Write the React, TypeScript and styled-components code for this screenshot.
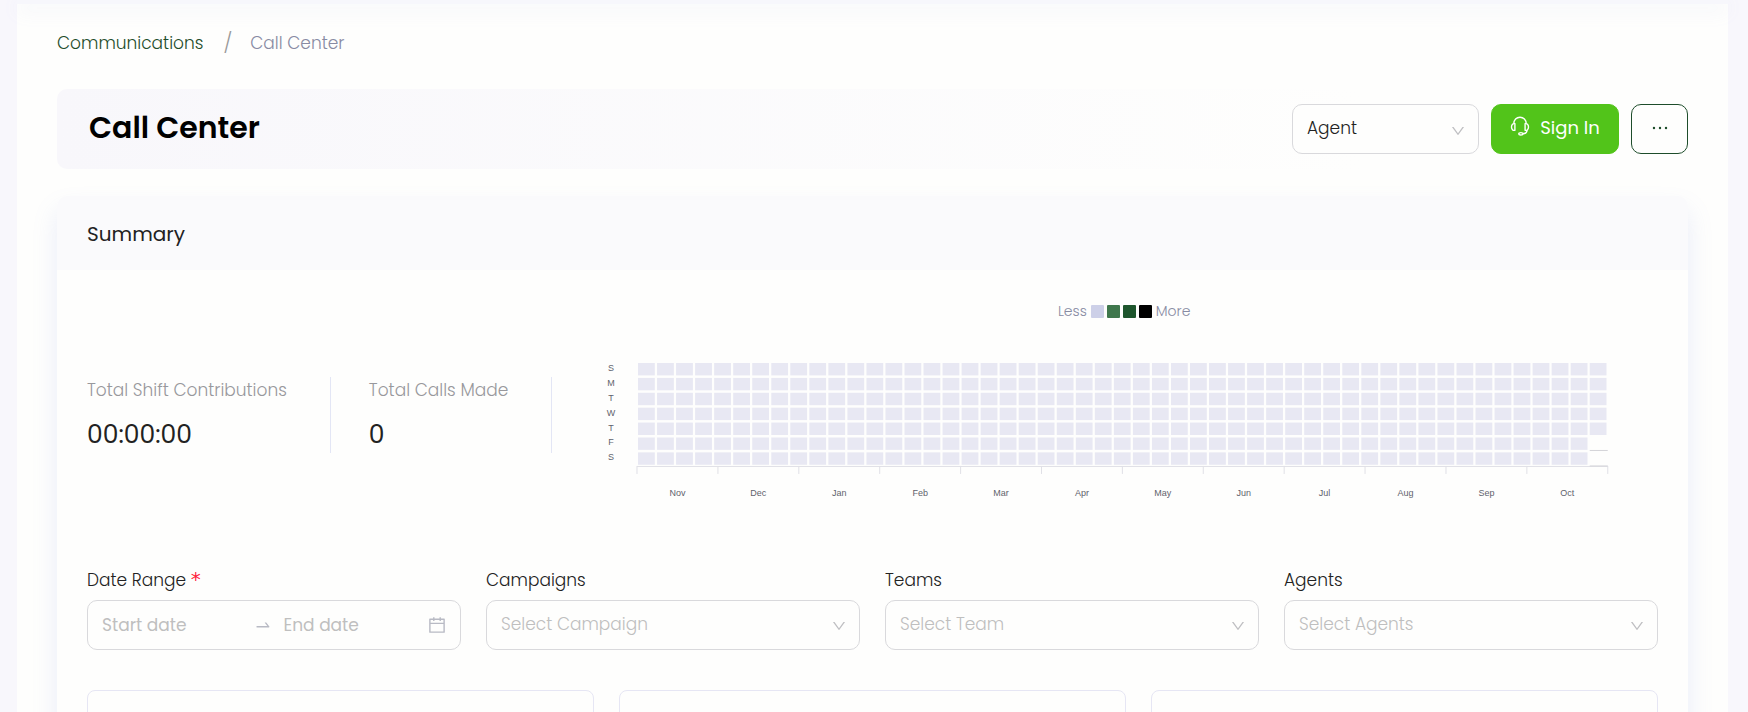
import React from 'react';
import styled, { createGlobalStyle, css } from 'styled-components';
import { AiOutlineCalendar, AiOutlineDown, AiOutlineEllipsis, AiOutlineSwapRight } from 'react-icons/ai';

const fontStack = `Poppins, Inter, 'Liberation Sans', sans-serif`;
const surface = '#fefefd';
const muted = '#888ba3';

const GlobalStyle = createGlobalStyle`
  *, *::before, *::after { box-sizing: border-box; }
  body {
    margin: 0;
    background: #f8f7fc;
    color: #222;
    font-family: ${fontStack};
    font-size: 17px;
    font-weight: 300;
    line-height: 24px;
  }
  button, input, select { font: inherit; color: inherit; }
  a { color: inherit; text-decoration: none; }
  h1, h2, p, dl, dd, dt, ol { margin: 0; padding: 0; }
`;

const Shell = styled.div`
  height: 100vh;
  overflow-y: auto;
  scrollbar-width: none;
  padding: 0 20px 0 17px;
`;

const TopBar = styled.header`
  position: relative;
  height: 4px;
  background: #f7f7fc;
  box-shadow: 0 6px 18px rgba(146, 153, 214, 0.2);
`;

const Page = styled.main`
  background: ${surface};
  min-height: 100%;
  padding: 0 40px 40px;
`;

const Breadcrumb = styled.nav`
  padding: 27px 0 34px;

  ol {
    display: flex;
    list-style: none;
  }
  li {
    display: flex;
    align-items: center;
  }
  li + li::before {
    content: '/';
    font-size: 20px;
    margin: 0 18px 0 20px;
    color: #999;
  }
`;

const CrumbLink = styled.a`
  color: #1e4d2b;
`;

const CrumbCurrent = styled.span`
  color: ${muted};
`;

const TitleBar = styled.div`
  display: flex;
  align-items: center;
  justify-content: space-between;
  height: 80px;
  padding-left: 32px;
  border-radius: 10px;
  background: linear-gradient(90deg, #f8f7fb, ${surface} 80%);
`;

const Title = styled.h1`
  padding-bottom: 2px;
  font-size: 30px;
  line-height: 40px;
  font-weight: 600;
  color: #000;
`;

const Actions = styled.div`
  display: flex;
  gap: 12px;
`;

const controlFrame = css`
  height: 50px;
  border: 1px solid #d9d9dc;
  border-radius: 10px;
  background: ${surface};
`;

const SelectBox = styled.div<{ $width?: string }>`
  display: grid;
  align-items: center;
  width: ${(p) => p.$width ?? '100%'};

  > * { grid-area: 1 / 1; }
  > svg {
    justify-self: end;
    margin: 3px 13px 0 0;
    color: #bfbfc2;
    pointer-events: none;
  }
`;

const SelectInput = styled.select<{ $placeholder?: boolean }>`
  ${controlFrame}
  appearance: none;
  width: 100%;
  padding: 0 40px 2px 14px;
  color: ${(p) => (p.$placeholder ? '#bfbfbf' : '#222')};
`;

const Button = styled.button<{ $primary?: boolean }>`
  display: flex;
  align-items: center;
  justify-content: center;
  gap: 10px;
  height: 50px;
  width: ${(p) => (p.$primary ? 128 : 57)}px;
  padding: 0 0 2px;
  border: 1px solid ${(p) => (p.$primary ? '#52c41a' : '#1e4d2b')};
  border-radius: 10px;
  background: ${(p) => (p.$primary ? '#52c41a' : surface)};
  color: ${(p) => (p.$primary ? '#fff' : '#1e4d2b')};
  font-size: 18px;
  font-weight: 400;
`;

const Card = styled.section`
  margin-top: 27px;
  border-radius: 10px;
  background: ${surface};
  box-shadow: 0 14px 24px rgba(130, 146, 224, 0.17);
`;

const CardHeader = styled.header`
  padding: 26px 30px 24px;
  border-radius: 10px 10px 0 0;
  background: #fafafc;

  h2 {
    font-size: 20px;
    line-height: 24px;
    font-weight: 400;
  }
`;

const CardBody = styled.div`
  padding: 30px;
`;

const Overview = styled.div`
  display: grid;
  grid-template-columns: 503fr 1068fr;
`;

const Stats = styled.dl`
  display: flex;
  align-items: flex-start;
  padding-top: 77px;
`;

const Stat = styled.div`
  height: 76px;
  padding-right: 43px;
  margin-right: 38px;
  border-right: 1px solid #e3e6f5;
  white-space: nowrap;

  dt {
    line-height: 26px;
    color: #98989c;
  }
  dd {
    margin-top: 16px;
    font-size: 25px;
    line-height: 32px;
    font-weight: 400;
    color: #222;
  }
`;

const Activity = styled.figure`
  margin: 0;
`;

const Legend = styled.figcaption`
  display: flex;
  align-items: center;
  justify-content: center;
  gap: 4px;
  height: 22px;
  font-size: 14px;
  color: ${muted};
`;

const Scale = styled.span`
  display: flex;
  gap: 3px;
`;

const Swatch = styled.span<{ $color: string }>`
  width: 13px;
  height: 13px;
  border-radius: 1px;
  background: ${(p) => p.$color};
`;

const Chart = styled.svg`
  display: block;
  width: 100%;
  margin-top: 28px;
  font-family: 'Liberation Sans', Arial, sans-serif;
  font-size: 9px;
  font-weight: 400;
`;

const Filters = styled.form`
  display: grid;
  grid-template-columns: repeat(4, 1fr);
  gap: 25px;
  margin-top: 46px;
`;

const Field = styled.div`
  display: flex;
  flex-direction: column;
  gap: 8px;
  min-width: 0;
`;

const Label = styled.label`
  color: #222;
`;

const Required = styled.span`
  font-family: 'DejaVu Sans', sans-serif;
  font-size: 20px;
  font-weight: 400;
  line-height: 1;
  color: #ff1f3d;
`;

const RangeBox = styled.div`
  ${controlFrame}
  display: flex;
  align-items: center;
  padding: 0 13px 0 14px;
  color: #b8bac4;

  svg { flex: none; }
`;

const DateInput = styled.input`
  flex: 1;
  min-width: 0;
  padding: 0;
  border: 0;
  outline: 0;
  background: none;
  font-weight: 400;
  color: #222;

  &::placeholder { color: #bfbfbf; opacity: 1; }
`;

const Arrow = styled(AiOutlineSwapRight)`
  margin: 0 12px 0 8px;
`;

const Panels = styled.div`
  display: grid;
  grid-template-columns: repeat(3, 1fr);
  gap: 25px;
  margin-top: 40px;
`;

const Panel = styled.div`
  height: 120px;
  border: 1px solid #e6e6f4;
  border-radius: 8px;
`;

const HeadsetShape = styled.svg`
  margin-bottom: 4px;
`;

const HeadsetIcon = () => (
  <HeadsetShape width="20" height="20" viewBox="0 0 20 20" fill="none" stroke="currentColor" strokeWidth="1.4" aria-hidden="true">
    <path d="M3.800 7.600C3.800 3.800 6.500 1.200 10 1.200s6.200 2.600 6.200 6.400" />
    <path d="M4.900 7.700c-1.900-.5-3.400 1-3.400 3.300s1.500 3.800 3.400 3.300z" strokeLinejoin="round" />
    <path d="M15.100 7.700c1.900-.5 3.400 1 3.400 3.300s-1.500 3.800-3.400 3.300z" strokeLinejoin="round" />
    <path d="M17 14.200c0 2.200-1.600 3.400-4 3.600" />
    <ellipse cx="10.900" cy="17.800" rx="2.100" ry="1.200" />
  </HeadsetShape>
);

const days = ['S', 'M', 'T', 'W', 'T', 'F', 'S'];
const months = ['Nov', 'Dec', 'Jan', 'Feb', 'Mar', 'Apr', 'May', 'Jun', 'Jul', 'Aug', 'Sep', 'Oct'];
const weeks = 51;
const left = 47;
const right = 1018;
const cellPitch = (right - left) / weeks;
const monthPitch = (right - left) / months.length;

const Heatmap = () => (
  <Chart viewBox="0 0 1068 172" role="img" aria-label="Calls per day">
    <g fill="#5f626c" textAnchor="middle">
      {days.map((d, i) => (
        <text key={i} x={21} y={21 + i * 14.9}>{d}</text>
      ))}
      {months.map((m, i) => (
        <text key={m} x={left + monthPitch * (i + 0.5)} y={146}>{m}</text>
      ))}
    </g>
    <g fill="#e8e8f3">
      {Array.from({ length: weeks * 7 - 2 }, (_, i) => (
        <rect
          key={i}
          x={left + 1 + Math.floor(i / 7) * cellPitch}
          y={13 + (i % 7) * 14.9}
          width={16.8}
          height={12.4}
        />
      ))}
    </g>
    <g stroke="#e0e0e6" fill="none">
      <path d={`M${left} 116.500H${right}`} />
      {Array.from({ length: months.length + 1 }, (_, i) => (
        <path key={i} d={`M${left + i * monthPitch} 116v8`} />
      ))}
      <path d={`M${right - 18} 100.500h18m-18 15.500h18`} stroke="#d4d4d8" />
    </g>
  </Chart>
);

const legendColors = ['#cdd0e8', '#3f774c', '#1e562d', '#000'];
const filters = [
  { id: 'campaigns', label: 'Campaigns', placeholder: 'Select Campaign' },
  { id: 'teams', label: 'Teams', placeholder: 'Select Team' },
  { id: 'agents', label: 'Agents', placeholder: 'Select Agents' },
];

export default function App() {
  return (
    <Shell>
      <GlobalStyle />
      <TopBar />
      <Page>
        <Breadcrumb aria-label="Breadcrumb">
          <ol>
            <li><CrumbLink href="#communications">Communications</CrumbLink></li>
            <li><CrumbCurrent aria-current="page">Call Center</CrumbCurrent></li>
          </ol>
        </Breadcrumb>

        <TitleBar>
          <Title>Call Center</Title>
          <Actions>
            <SelectBox $width="187px">
              <SelectInput aria-label="Role" defaultValue="agent">
                <option value="agent">Agent</option>
              </SelectInput>
              <AiOutlineDown size={16} />
            </SelectBox>
            <Button type="button" $primary><HeadsetIcon />Sign In</Button>
            <Button type="button" aria-label="More actions"><AiOutlineEllipsis size={22} /></Button>
          </Actions>
        </TitleBar>

        <Card>
          <CardHeader><h2>Summary</h2></CardHeader>
          <CardBody>
            <Overview>
              <Stats>
                <Stat><dt>Total Shift Contributions</dt><dd>00:00:00</dd></Stat>
                <Stat><dt>Total Calls Made</dt><dd>0</dd></Stat>
              </Stats>
              <Activity>
                <Legend>
                  Less
                  <Scale>
                    {legendColors.map((c) => <Swatch key={c} $color={c} />)}
                  </Scale>
                  More
                </Legend>
                <Heatmap />
              </Activity>
            </Overview>

            <Filters>
              <Field>
                <Label htmlFor="start-date">Date Range <Required>*</Required></Label>
                <RangeBox>
                  <DateInput id="start-date" placeholder="Start date" />
                  <Arrow size={18} />
                  <DateInput aria-label="End date" placeholder="End date" />
                  <AiOutlineCalendar size={20} />
                </RangeBox>
              </Field>
              {filters.map((f) => (
                <Field key={f.id}>
                  <Label htmlFor={f.id}>{f.label}</Label>
                  <SelectBox>
                    <SelectInput id={f.id} defaultValue="" $placeholder>
                      <option value="">{f.placeholder}</option>
                    </SelectInput>
                    <AiOutlineDown size={16} />
                  </SelectBox>
                </Field>
              ))}
            </Filters>

            <Panels>
              <Panel />
              <Panel />
              <Panel />
            </Panels>
          </CardBody>
        </Card>
      </Page>
    </Shell>
  );
}
